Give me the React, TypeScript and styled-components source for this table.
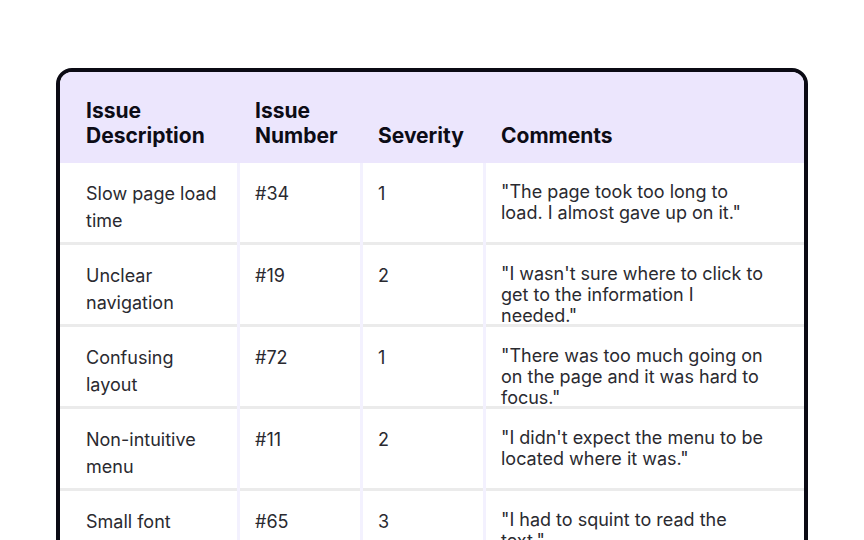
import React from "react";
import styled, { createGlobalStyle } from "styled-components";

const GlobalStyle = createGlobalStyle`
  html, body {
    margin: 0;
    padding: 0;
    background: #ffffff;
    overflow: hidden;
  }
  * { box-sizing: border-box; }
`;

const Page = styled.div`
  height: 540px;
  overflow: hidden;
  padding: 68px 56px 0;
  font-family: Inter, "Noto Sans", sans-serif;
`;

const Card = styled.div`
  width: 752px;
  border: 4px solid #0b0a14;
  border-radius: 16px 16px 0 0;
  overflow: hidden;
  background: #ffffff;
`;

const COLS = "177px 120px 120px 318px";

const HeaderRow = styled.div`
  display: grid;
  grid-template-columns: ${COLS};
  column-gap: 3px;
  height: 91px;
  background: #ece6fd;
`;

const HeadCell = styled.div<{ $first?: boolean }>`
  display: flex;
  align-items: flex-end;
  padding: 0 12px 15px ${(p) => (p.$first ? "26px" : "15px")};
  font-size: 21px;
  font-weight: 700;
  line-height: 25px;
  color: #0d0c16;
`;

const Body = styled.div`
  display: grid;
  grid-template-columns: ${COLS};
  column-gap: 3px;
  background: #f3f1fe;
`;

const Cell = styled.div<{ $first?: boolean; $comment?: boolean }>`
  height: 82px;
  background: #ffffff;
  border-bottom: 3px solid #ebebeb;
  padding: ${(p) =>
    p.$comment ? "18px 36px 0 15px" : p.$first ? "17px 14px 0 26px" : "17px 12px 0 15px"};
  font-size: 18px;
  font-weight: 400;
  line-height: ${(p) => (p.$comment ? "21px" : "27px")};
  color: #2a2a30;
  white-space: pre-line;
`;

const rows = [
  { desc: "Slow page load time", num: "#34", sev: "1", comment: "\"The page took too long to load. I almost gave up on it.\"" },
  { desc: "Unclear navigation", num: "#19", sev: "2", comment: "\"I wasn't sure where to click to get to the information I needed.\"" },
  { desc: "Confusing layout", num: "#72", sev: "1", comment: "\"There was too much going on on the page and it was hard to focus.\"" },
  { desc: "Non-intuitive menu", num: "#11", sev: "2", comment: "\"I didn't expect the menu to be located where it was.\"" },
  { desc: "Small font\nsize", num: "#65", sev: "3", comment: "\"I had to squint to read the text.\"" },
];

export default function App() {
  return (
    <>
      <GlobalStyle />
      <Page>
        <Card>
          <HeaderRow>
            <HeadCell $first>Issue Description</HeadCell>
            <HeadCell>Issue Number</HeadCell>
            <HeadCell>Severity</HeadCell>
            <HeadCell>Comments</HeadCell>
          </HeaderRow>
          <Body>
            {rows.map((r) => (
              <React.Fragment key={r.num}>
                <Cell $first>{r.desc}</Cell>
                <Cell>{r.num}</Cell>
                <Cell>{r.sev}</Cell>
                <Cell $comment>{r.comment}</Cell>
              </React.Fragment>
            ))}
          </Body>
        </Card>
      </Page>
    </>
  );
}
